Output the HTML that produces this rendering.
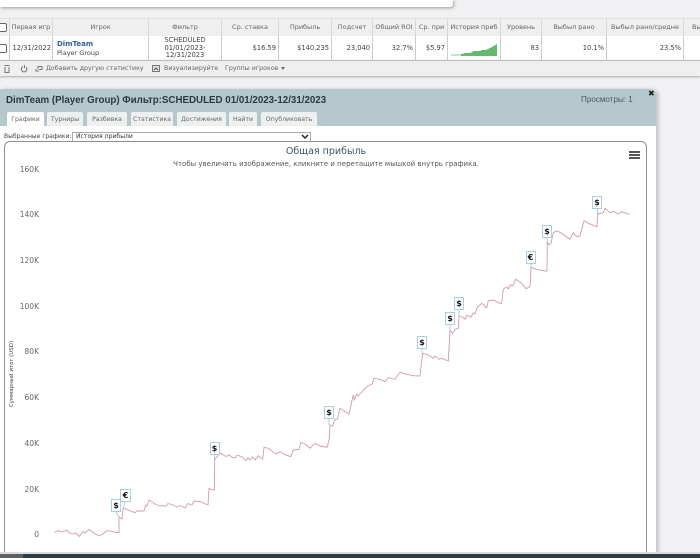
<!DOCTYPE html>
<html style="overflow:hidden"><head><meta charset="utf-8"><style>
html,body{margin:0;padding:0;width:700px;height:558px;overflow:hidden}
body{position:relative;background:#f1f1f3;font-family:"DejaVu Sans","Noto Sans CJK SC",sans-serif;color:#444}
div,span{position:absolute;box-sizing:border-box;white-space:nowrap}
#w{left:0;top:0;width:700px;height:558px;overflow:hidden;filter:blur(.3px)}
.h{top:19px;height:17px;background:#efefef;border-right:1px solid #d8d8d8;font-size:6.5px;line-height:17px;text-align:center;color:#666}
.c{top:36px;height:24px;background:#fff;border-right:1px solid #ccc;font-size:6.7px;line-height:24px;color:#444;text-align:right;padding-right:2px}
.tab{top:112px;height:14px;background:#eef0f0;font-size:6.2px;line-height:15px;text-align:center;color:#666;border-radius:2px 2px 0 0}
.y{left:10px;width:29px;text-align:right;font-size:7.5px;line-height:10px;color:#666}
.f{width:10px;height:13px;background:#fff;border:1px solid #a9cdea;font:bold 8px/11px "DejaVu Sans",sans-serif;text-align:center;color:#111}
.cb{left:-2px;width:9px;height:9px;background:#fff;border:1px solid #666;border-radius:2px}
.t{font-size:6.3px;line-height:10px;color:#666;top:64px}
</style></head><body><div id="w">
<div style="left:0;top:0;width:453px;height:7px;background:#fff;box-shadow:1px 1px 3px #999;border-radius:0 0 3px 0"></div>
<div style="left:0;top:18px;width:700px;height:1px;background:#e2e2e2"></div>

<div class="h" style="left:0;width:10px"></div>
<div class="h" style="left:10px;width:43px">Первая игр</div>
<div class="h" style="left:53px;width:96px">Игрок</div>
<div class="h" style="left:149px;width:73px">Фильтр</div>
<div class="h" style="left:222px;width:57px">Ср. ставка</div>
<div class="h" style="left:279px;width:53px">Прибыль</div>
<div class="h" style="left:332px;width:41px">Подсчет</div>
<div class="h" style="left:373px;width:43px">Общий ROI</div>
<div class="h" style="left:416px;width:32px">Ср. при</div>
<div class="h" style="left:448px;width:53px">История приб</div>
<div class="h" style="left:501px;width:41px">Уровень</div>
<div class="h" style="left:542px;width:65px">Выбыл рано</div>
<div class="h" style="left:607px;width:77px">Выбыл рано/средне</div>
<div class="h" style="left:684px;width:20px;text-align:left;padding-left:8px">Вы</div>

<div class="c" style="left:0;width:10px"></div>
<div class="c" style="left:10px;width:43px;padding-right:1px">12/31/2022</div>
<div class="c" style="left:53px;width:96px"></div>
<div style="left:57px;top:40px;font:bold 7px/9px 'DejaVu Sans',sans-serif;color:#2f5f9e">DimTeam</div>
<div style="left:57px;top:48.5px;font-size:6.5px;line-height:9px;color:#444">Player Group</div>
<div class="c" style="left:149px;width:73px;line-height:7.6px;padding:1px 0 0;text-align:center;white-space:normal">SCHEDULED<br>01/01/2023-<br>12/31/2023</div>
<div class="c" style="left:222px;width:57px">$16.59</div>
<div class="c" style="left:279px;width:53px">$140,235</div>
<div class="c" style="left:332px;width:41px">23,040</div>
<div class="c" style="left:373px;width:43px">32.7%</div>
<div class="c" style="left:416px;width:32px">$5.97</div>
<div class="c" style="left:448px;width:53px"></div>
<svg style="position:absolute;left:450px;top:43px" width="49" height="14"><path d="M1 12V11H12L15 10H20L24 8H30L32 7H36L42 4L47 1V13H1Z" fill="#63b96c"/><path d="M1 11H11V13H1Z" fill="#c8e4cb"/></svg>
<div class="c" style="left:501px;width:41px">83</div>
<div class="c" style="left:542px;width:65px">10.1%</div>
<div class="c" style="left:607px;width:77px">23.5%</div>
<div class="c" style="left:684px;width:16px;border:0"></div>
<div class="cb" style="top:23px"></div>
<div class="cb" style="top:44px"></div>

<div style="left:0;top:60px;width:700px;height:16px;background:#efefef;border-top:1px solid #bbb;box-shadow:0 1px 2px #aaa"></div>
<svg style="position:absolute;left:3px;top:64px" width="32" height="10" fill="none" stroke="#777" stroke-width="1"><path d="M1.500 1.500H6.500M2 3V8.500H6V3" /><path d="M20 2.500A2.800 2.800 0 1 0 23 3M21.500 1V4"/></svg>
<svg style="position:absolute;left:35px;top:64px" width="8" height="10" fill="none" stroke="#777"><path d="M1 5V7H4M3 5V2.500H7V5.500H4"/></svg>
<div class="t" style="left:46px">Добавить другую статистику</div>
<svg style="position:absolute;left:152px;top:64px" width="9" height="9"><rect x=".5" y="1.500" width="7" height="6" fill="#ddd" stroke="#777"/><path d="M2 6L4 4L6 6" fill="none" stroke="#555"/></svg>
<div class="t" style="left:164px">Визуализируйте</div>
<div class="t" style="left:225px">Группы игроков</div>
<div style="left:281px;top:67px;width:0;height:0;border:2.500px solid transparent;border-top:3px solid #666"></div>

<div style="left:0;top:89px;width:656px;height:469px;background:#fff;box-shadow:3px 0 3px #c8c8cc;border-radius:0 7px 0 0"></div>
<div style="left:0;top:89px;width:656px;height:37px;background:#b5c8ce;border-radius:0 7px 0 0"></div>
<div style="left:6px;top:93.500px;font:bold 9.750px/14px 'Liberation Sans','Noto Sans CJK SC',sans-serif;color:#2c3a40">DimTeam (Player Group) Фильтр:SCHEDULED 01/01/2023-12/31/2023</div>
<div style="left:581px;top:94px;font:8.100px/12px 'Liberation Sans',sans-serif;color:#4a5a60">Просмотры: 1</div>
<div style="left:648px;top:89px;font:bold 8px/10px 'DejaVu Sans',sans-serif;color:#222">✖</div>

<div class="tab" style="left:7px;width:37px;background:#fff">Графики</div>
<div class="tab" style="left:47px;width:36px">Турниры</div>
<div class="tab" style="left:87px;width:40px">Разбивка</div>
<div class="tab" style="left:131px;width:42px">Статистика</div>
<div class="tab" style="left:177px;width:49px">Достижения</div>
<div class="tab" style="left:229px;width:28px">Найти</div>
<div class="tab" style="left:261px;width:56px">Опубликовать</div>

<div style="left:4px;top:132px;font-size:6px;line-height:10px;color:#444">Выбранные графики:</div>
<div style="left:72px;top:132px;width:239px;height:10px;background:#fff;border:1px solid #aaa;font-size:6.100px;line-height:8px;padding-left:3px;color:#333">История прибыли</div>
<svg style="position:absolute;left:301px;top:134px" width="8" height="6"><path d="M1 1L4 4L7 1" fill="none" stroke="#222" stroke-width="1.500"/></svg>

<div style="left:4px;top:141px;width:643px;height:430px;border:1px solid #8f8f8f;border-radius:6px;background:#fff"></div>
<div style="left:126px;top:144.500px;width:400px;text-align:center;font-size:9.500px;line-height:14px;color:#3f5560">Общая прибыль</div>
<div style="left:126px;top:159px;width:400px;text-align:center;font-size:7px;line-height:10px;color:#555">Чтобы увеличить изображение, кликните и перетащите мышкой внутрь графика.</div>
<div style="left:629px;top:151px;width:10.500px;height:8px;border-top:2px solid #555;border-bottom:2px solid #555"></div>
<div style="left:629px;top:154px;width:10.500px;height:2px;background:#555"></div>

<div class="y" style="top:164.500px">160K</div>
<div class="y" style="top:210px">140K</div>
<div class="y" style="top:256px">120K</div>
<div class="y" style="top:301.500px">100K</div>
<div class="y" style="top:347px">80K</div>
<div class="y" style="top:393px">60K</div>
<div class="y" style="top:439px">40K</div>
<div class="y" style="top:484.500px">20K</div>
<div class="y" style="top:530px">0</div>
<div style="left:-38px;top:369px;width:100px;height:10px;transform:rotate(-90deg);text-align:center;font-size:5.500px;line-height:10px;color:#444">Суммарный итог (USD)</div>

<svg style="position:absolute;left:0;top:0" width="700" height="558" fill="none">
<path stroke="#d49aa6" stroke-width=".9" stroke-linejoin="round" d="M54.500 532.500L58 530.500L61 532L65 531L66 530L70 533L72 534L76 533L79.500 536.500L83 531.500L85 533L89 529.500L94 533L99 536L103 534L106 531L111 531L116 532.500L119 532.500L119 517L122 519L123.300 508L128 510L135 512.700L137 511L144 511L145.700 505L147 506L149 500L155 504L160 506L163 505.500L165.700 506.500L168 503.500L173 505L177 507L180 505.500L185 508L188 503.500L192 505L194 501L200 501.500L206.700 504.500L208 505L209 488.500L213.300 490L214.300 490L214.700 460L216.700 457L220 453L225 456L226.700 456.300L229.300 454.700L231.700 457.300L235 458L237.300 455L241.700 456.700L246 460.700L248 457.700L250 460L252.300 456.700L255 460L258.300 455.700L262.700 459.300L264 447.300L268.300 448.300L276 454L280 451.700L285 454.700L290.700 456.700L293.300 450L299.300 449.300L300.700 442.300L305 444L310 448.300L315 443.300L320 446L327.300 447.300L329.300 438L330 425L332.700 426L335 419.300L337.300 419.300L340 408.300L346.700 412.700L349 414L353.300 395L354.300 400L356.700 394L358.300 396L363.300 390L368.300 385.700L372.300 384L374 378.300L380 379.300L385 381.700L388.300 377.700L395 379.300L400 372.300L406.700 374.300L413.300 375.700L420 376L420.700 369.300L422.700 353.300L428.300 355L433.300 358.300L435 356L439.300 359.300L441.700 358.300L448.300 361L450 330L452.700 333.300L455 329.300L458.300 328.300L459 316L463.300 317.300L465 319.300L466.700 315L471 317.300L473.300 312.700L475 314L477.300 307.300L481.700 303.300L486.700 308L488.300 300.700L493.300 300L500 303.300L501.700 303.300L503.300 289.300L506.700 286.700L508.300 289L510.700 284.700L512.700 286L515.700 279.300L521.700 283.300L526 288.700L530 286.700L531 267.300L536.700 269.300L545 271L547 271L547.300 241.700L549 245L551 243.300L553.300 232.700L556.700 230.700L561.700 233.300L570 239.300L573.300 232.700L576.700 236.700L580 236L584 220.700L588.300 223.300L597 226.700L597.700 214L603.300 212.700L605 208.300L610 212.700L613.300 211.300L618.300 214L621.700 211.700L629.300 214.300"/>
<path stroke="#a9cdea" stroke-width="1" d="M116 511.500L119 518M125 502.500L123 509M214.500 455L214.500 460M329 418.500V425M422 349V353M450 325V330M459 310.500V316M531 263V267M547 237.500V242M597.500 209V214"/>
</svg>
<div class="f" style="left:111px;top:499px">$</div>
<div class="f" style="left:120px;top:489px;width:11px">€</div>
<div class="f" style="left:209.500px;top:442px">$</div>
<div class="f" style="left:324px;top:406px">$</div>
<div class="f" style="left:417px;top:336px">$</div>
<div class="f" style="left:445px;top:312px">$</div>
<div class="f" style="left:454px;top:297px">$</div>
<div class="f" style="left:525.500px;top:251px">€</div>
<div class="f" style="left:542px;top:225px">$</div>
<div class="f" style="left:592px;top:196px">$</div>

<div style="left:0;top:552px;width:700px;height:2px;background:#dcdcdc"></div>
<div style="left:0;top:554px;width:700px;height:4px;background:#2b3c42"></div>
<div style="left:0;top:554px;width:23px;height:4px;background:#5a5f62"></div>
</div></body></html>
